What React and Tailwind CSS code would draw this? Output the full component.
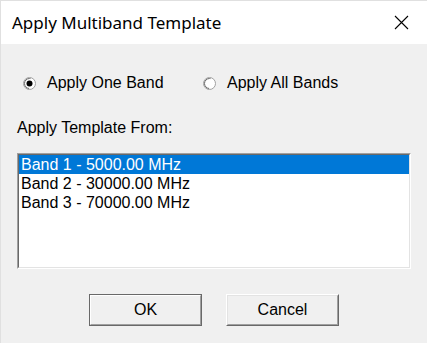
import React, { useState } from 'react';

const bands = ['Band 1 - 5000.00 MHz', 'Band 2 - 30000.00 MHz', 'Band 3 - 70000.00 MHz'];

const Radio = ({ checked }) => (
  <svg width="13" height="13" viewBox="0 0 13 13">
    <circle cx="6.5" cy="6.5" r="6" fill="#fff" stroke="#a0a0a0" />
    <circle cx="6.5" cy="6.5" r="5" fill="none" stroke="#696969" strokeDasharray="16 16" strokeDashoffset="-8" />
    {checked && <circle cx="6.5" cy="6.5" r="3" fill="#000" />}
  </svg>
);

const App = () => {
  const [mode, setMode] = useState('one');
  const [selected, setSelected] = useState(0);

  return (
    <div className="w-[427px] h-[343px] bg-[#f0f0f0] border-t border-l border-[#e0e0e0] text-black text-[16px] font-['Liberation_Sans',sans-serif] overflow-hidden">
      {/* title bar */}
      <div className="h-[43px] bg-white flex items-center justify-between pl-[11px] pr-[18px]">
        <span className="text-[17px] font-['Noto_Sans',sans-serif] text-black">Apply Multiband Template</span>
        <svg width="15" height="15" viewBox="0 0 15 15">
          <path d="M1 1L14 14M14 1L1 14" stroke="#000" strokeWidth="1.1" />
        </svg>
      </div>

      <div className="pl-[16px] pr-[16px]">
        {/* radio options */}
        <div className="flex items-center mt-[31px] h-[16px]">
          <button className="flex items-center ml-[6px] w-[180px]" onClick={() => setMode('one')}>
            <Radio checked={mode === 'one'} />
            <span className="ml-[11px]">Apply One Band</span>
          </button>
          <button className="flex items-center" onClick={() => setMode('all')}>
            <Radio checked={mode === 'all'} />
            <span className="ml-[11px]">Apply All Bands</span>
          </button>
        </div>

        <div className="mt-[28px] leading-[18px]">Apply Template From:</div>

        {/* list box */}
        <div className="mt-[16px] w-[394px] h-[116px] border border-t-[#a0a0a0] border-l-[#a0a0a0] border-b-white border-r-white">
          <div className="w-full h-full border border-t-[#696969] border-l-[#696969] border-b-[#e3e3e3] border-r-[#e3e3e3] bg-white">
            {bands.map((b, i) => (
              <div
                key={b}
                onClick={() => setSelected(i)}
                className={`h-[19px] leading-[19px] pl-[2px] ${selected === i ? 'bg-[#0078d7] text-white' : 'text-black'}`}
              >
                {b}
              </div>
            ))}
          </div>
        </div>

        {/* buttons */}
        <div className="flex mt-[25px] ml-[72px] gap-[24px]">
          <button className="w-[113px] h-[32px] border border-[#696969]">
            <div className="w-full h-full border border-t-white border-l-white border-b-[#a0a0a0] border-r-[#a0a0a0] flex items-center justify-center">
              OK
            </div>
          </button>
          <button className="w-[113px] h-[32px] border border-t-white border-l-white border-b-[#696969] border-r-[#696969]">
            <div className="w-full h-full border border-t-[#e3e3e3] border-l-[#e3e3e3] border-b-[#a0a0a0] border-r-[#a0a0a0] flex items-center justify-center">
              Cancel
            </div>
          </button>
        </div>
      </div>
    </div>
  );
};

export default App;
